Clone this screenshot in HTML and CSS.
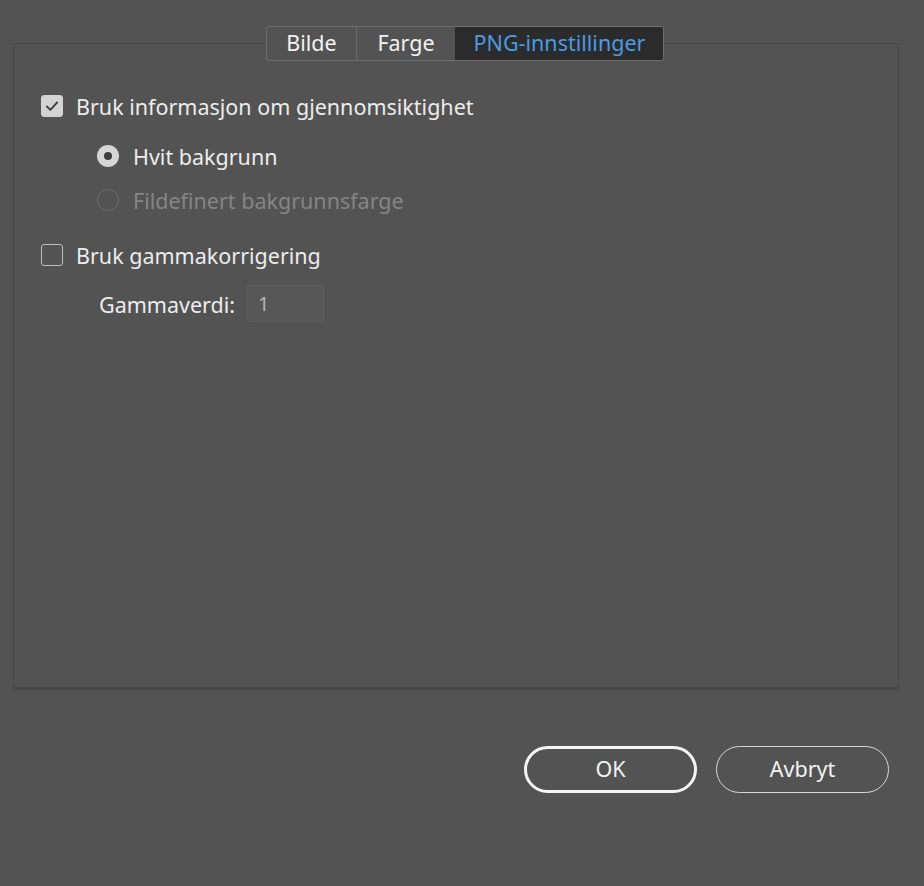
FILE: index.html
```html
<!DOCTYPE html>
<html lang="no">
<head>
<meta charset="utf-8">
<title>PNG-innstillinger</title>
<link rel="stylesheet" href="styles.css">
</head>
<body>
<div class="dialog">
  <div class="tabs">
    <div class="tab">Bilde</div>
    <div class="tab">Farge</div>
    <div class="tab active">PNG-innstillinger</div>
  </div>
  <div class="panel">
    <div class="row check-row">
      <span class="checkbox checked">
        <svg viewBox="0 0 22 22" width="22" height="22"><path d="M5.8 11.4 L9.4 14.8 L16.2 7.4" fill="none" stroke="#3a3a3a" stroke-width="1.8" stroke-linecap="round" stroke-linejoin="round"/></svg>
      </span>
      <span class="label">Bruk informasjon om gjennomsiktighet</span>
    </div>
    <div class="row radio-row first-radio">
      <span class="radio checked"></span>
      <span class="label">Hvit bakgrunn</span>
    </div>
    <div class="row radio-row">
      <span class="radio disabled"></span>
      <span class="label disabled-text">Fildefinert bakgrunnsfarge</span>
    </div>
    <div class="row check-row second-check">
      <span class="checkbox"></span>
      <span class="label">Bruk gammakorrigering</span>
    </div>
    <div class="row gamma-row">
      <span class="label">Gammaverdi:</span>
      <span class="input">1</span>
    </div>
  </div>
  <div class="buttons">
    <button class="btn primary">OK</button>
    <button class="btn">Avbryt</button>
  </div>
</div>
</body>
</html>
```

FILE: styles.css
```css
html, body {
  margin: 0;
  padding: 0;
  background: #535353;
  width: 924px;
  height: 886px;
  overflow: hidden;
}
body {
  font-family: "Noto Sans", "Open Sans", sans-serif;
  font-size: 21.5px;
  color: #ececec;
}
.dialog {
  position: relative;
  padding: 43px 25px 0 13px;
}
.tabs {
  position: absolute;
  top: 26px;
  left: 266px;
  display: flex;
  height: 33px;
  border: 1px solid #6e6e6e;
  border-radius: 3px;
  background: #535353;
  z-index: 2;
  overflow: hidden;
}
.tab {
  display: flex;
  align-items: center;
  justify-content: center;
  padding: 0 0 2px;
  color: #f2f2f2;
  border-left: 1px solid #6a6a6a;
}
.tab:nth-child(1) { width: 89px; border-left: none; }
.tab:nth-child(2) { width: 98px; }
.tab.active {
  width: 207px;
  background: #2b2b2b;
  color: #4b9ae2;
  border-left-color: #2b2b2b;
}
.panel {
  height: 645px;
  border: 1px solid #474747;
  border-radius: 2px;
  box-shadow: 0 2px 1px rgba(0,0,0,0.12);
  padding: 0;
  box-sizing: border-box;
  display: flex;
  flex-direction: column;
}
.row {
  display: flex;
  align-items: center;
  height: 24px;
}
.check-row { padding-left: 27px; }
.check-row:first-child { margin-top: 50px; }
.checkbox {
  width: 22px;
  height: 22px;
  box-sizing: border-box;
  border: 1.5px solid #bdbdbd;
  border-radius: 3px;
  margin-right: 13px;
  display: flex;
  align-items: center;
  justify-content: center;
  flex-shrink: 0;
}
.checkbox.checked {
  background: #d3d3d3;
  border-color: #d3d3d3;
}
.checkbox svg { display: block; flex-shrink: 0; }
.radio-row { padding-left: 83px; }
.first-radio { margin-top: 26px; }
.radio-row + .radio-row { margin-top: 20px; }
.radio {
  width: 22px;
  height: 22px;
  box-sizing: border-box;
  border-radius: 50%;
  margin-right: 14px;
  flex-shrink: 0;
}
.radio.checked {
  background: #d6d6d6;
  position: relative;
}
.radio.checked::after {
  content: "";
  position: absolute;
  left: 7px;
  top: 7px;
  width: 8px;
  height: 8px;
  border-radius: 50%;
  background: #3c3c3c;
}
.radio.disabled {
  border: 1.5px solid #6c6c6c;
}
.disabled-text { color: #858585; }
.second-check { margin-top: 31px; }
.gamma-row {
  padding-left: 85px;
  margin-top: 18px;
  height: 37px;
}
.gamma-row .label { margin-right: 12px; margin-top: 1px; }
.input {
  width: 77px;
  height: 37px;
  box-sizing: border-box;
  background: #575757;
  border: 1px solid #5c5c5c;
  border-radius: 2px;
  padding-left: 10px;
  color: #b8b8b8;
  display: flex;
  align-items: center;
  font-size: 20px;
}
.buttons {
  display: flex;
  justify-content: flex-end;
  gap: 19px;
  margin-top: 58px;
  padding-right: 10px;
}
.btn {
  width: 173px;
  height: 47px;
  box-sizing: border-box;
  border-radius: 24px;
  background: transparent;
  color: #f2f2f2;
  font: inherit;
  border: 1.5px solid #d8d8d8;
  padding: 0 0 2px;
}
.btn.primary {
  border: 3px solid #f4f4f4;
}
```
